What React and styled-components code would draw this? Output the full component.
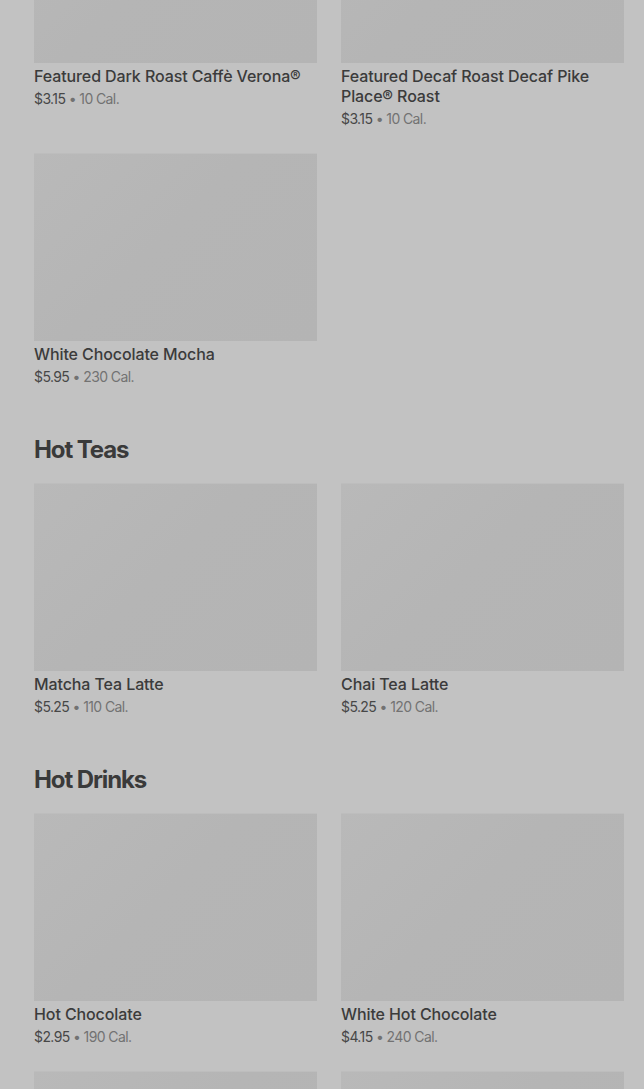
import React from "react";
import styled, { createGlobalStyle } from "styled-components";

const GlobalStyle = createGlobalStyle`
  html, body {
    margin: 0;
    padding: 0;
    background: #c2c2c2;
    overflow: hidden;
  }
  body {
    font-family: Inter, "Noto Sans", "Liberation Sans", sans-serif;
  }
`;

// page scrolled down part way through the first section
const Page = styled.div`
  padding: 0 20px 0 34px;
  margin-top: -125px;
  height: 1214px;
  overflow: hidden;
`;

const Section = styled.section`
  & + & {
    padding-top: 47px;
  }
`;

const SectionTitle = styled.h2`
  margin: 0 0 17px;
  font-size: 24px;
  line-height: 32px;
  font-weight: 700;
  letter-spacing: -1.1px;
  color: #3a3a3a;
`;

const Grid = styled.div`
  display: grid;
  grid-template-columns: repeat(2, 283px);
  column-gap: 24px;
  row-gap: 24px;
`;

const Card = styled.div`
  display: flex;
  flex-direction: column;
`;

const Thumb = styled.div`
  height: 188px;
  background: linear-gradient(135deg, #b9b9b9 0%, #b5b5b5 45%, #b4b4b4 100%);
  box-shadow: inset 0 1px 0 #bdbdbd;
`;

const Name = styled.div`
  margin-top: 3px;
  font-size: 16px;
  line-height: 20px;
  font-weight: 500;
  letter-spacing: -0.1px;
  color: #3b3b3b;
  padding-right: 8px;
`;

const Meta = styled.div`
  margin-top: 3px;
  font-size: 14px;
  line-height: 20px;
  color: #727272;
  letter-spacing: -0.6px;
`;

const Price = styled.span`
  color: #474747;
`;

const sections = [
  {
    title: null,
    items: [
      { name: "Featured Dark Roast Caffè Verona®", price: "$3.15", cal: "10 Cal." },
      { name: "Featured Decaf Roast Decaf Pike Place® Roast", price: "$3.15", cal: "10 Cal." },
      { name: "White Chocolate Mocha", price: "$5.95", cal: "230 Cal." },
    ],
  },
  {
    title: "Hot Teas",
    items: [
      { name: "Matcha Tea Latte", price: "$5.25", cal: "110 Cal." },
      { name: "Chai Tea Latte", price: "$5.25", cal: "120 Cal." },
    ],
  },
  {
    title: "Hot Drinks",
    items: [
      { name: "Hot Chocolate", price: "$2.95", cal: "190 Cal." },
      { name: "White Hot Chocolate", price: "$4.15", cal: "240 Cal." },
      { name: "Caramel Apple Spice", price: "$4.95", cal: "360 Cal." },
      { name: "Steamed Apple Juice", price: "$4.45", cal: "250 Cal." },
    ],
  },
];

export default function App() {
  return (
    <>
      <GlobalStyle />
      <Page>
        {sections.map((section, i) => (
          <Section key={i}>
            {section.title && <SectionTitle>{section.title}</SectionTitle>}
            <Grid>
              {section.items.map((item) => (
                <Card key={item.name}>
                  <Thumb />
                  <Name>{item.name}</Name>
                  <Meta>
                    <Price>{item.price}</Price> • {item.cal}
                  </Meta>
                </Card>
              ))}
            </Grid>
          </Section>
        ))}
      </Page>
    </>
  );
}
